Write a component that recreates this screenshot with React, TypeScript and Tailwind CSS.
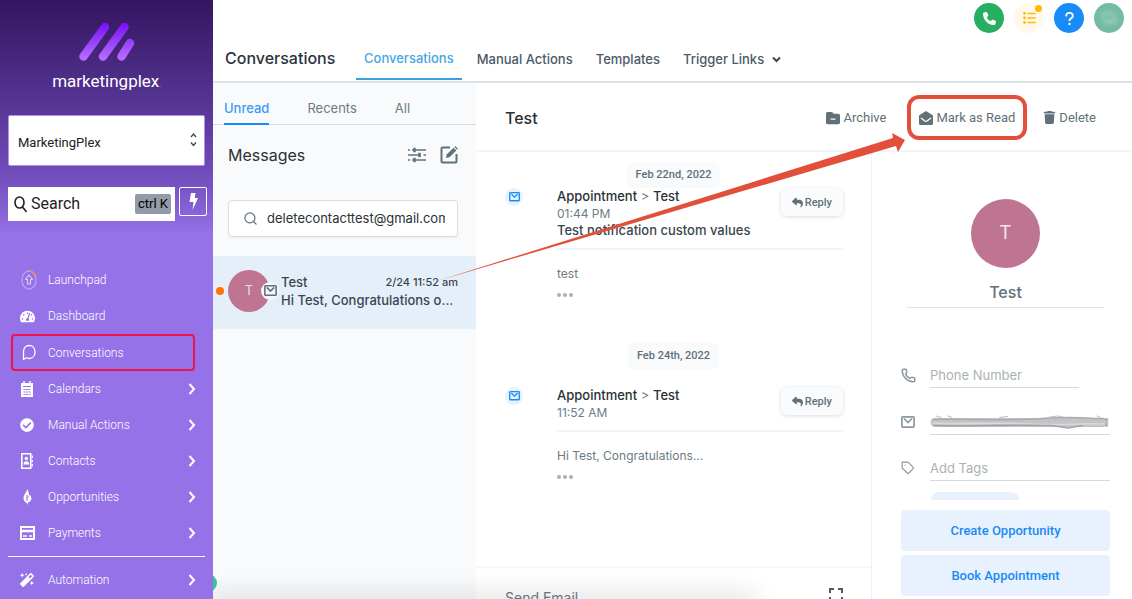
import React, { useState } from "react";
import clsx from "clsx";
import { Phone, Search } from "lucide-react";
import { FaCheckCircle, FaMagic, FaTachometerAlt } from "react-icons/fa";
import { FaFolderMinus, FaPhone, FaQuestion, FaReply, FaTrash } from "react-icons/fa6";
import { FiTag } from "react-icons/fi";

function Logo() {
  return (
    <svg width="58" height="42" viewBox="0 0 58 42" fill="none">
      <defs>
        <linearGradient id="bar" x1="0" y1="38" x2="0" y2="4" gradientUnits="userSpaceOnUse">
          <stop stopColor="#b56bff" />
          <stop offset="1" stopColor="#7a12f6" />
        </linearGradient>
      </defs>
      <g stroke="url(#bar)" strokeWidth="8.5" strokeLinecap="round">
        <path d="M5.500 36.500 27 7" />
        <path d="M25 36.500 46.500 7" />
        <path d="M43.500 36.500 52 23" />
      </g>
    </svg>
  );
}

function LaunchpadIcon() {
  return (
    <svg className="ml-1" width="16" height="20" viewBox="0 0 16 20" fill="none">
      <ellipse cx="8" cy="10" rx="7" ry="9" stroke="#b9a3f1" strokeWidth="1.300" />
      <path d="M9 1c3 .6 5 2.600 6 6" stroke="#f0904a" strokeWidth="1.500" />
      <path d="M8 5 4.500 9.500h2V14h3V9.500h2z" stroke="#d9ccf8" strokeWidth="1.200" strokeLinejoin="round" />
    </svg>
  );
}

function BubbleIcon() {
  return (
    <svg className="ml-1" width="14" height="17" viewBox="0 0 14 17" fill="none">
      <path
        d="M1.500 15.500V8c0-4 2.500-6.500 5.800-6.500S13 4.200 13 8s-2.400 6.500-5.700 6.500c-1.300 0-2.200-.2-3-.7z"
        stroke="#fff"
        strokeWidth="1.300"
        strokeLinejoin="round"
      />
    </svg>
  );
}

function CalendarIcon() {
  return (
    <svg width="12" height="16" viewBox="0 0 12 16" fill="none">
      <path d="M0 2h12v14H0z" fill="#fff" />
      <path d="M3 0v3M9 0v3" stroke="#fff" strokeWidth="1.500" />
      <path d="M2 5.500h8" stroke="#9572e8" />
      <path d="M2.500 8.500h7M2.500 11h7M2.500 13.500h7" stroke="#9572e8" strokeDasharray="2 .6" />
    </svg>
  );
}

function ContactsIcon() {
  return (
    <svg width="12" height="16" viewBox="0 0 12 16" fill="none">
      <path d="M.8.8h8.900v14.400H.8z" stroke="#fff" strokeWidth="1.600" />
      <circle cx="5.300" cy="5.500" r="1.700" fill="#fff" />
      <path d="M2.500 11.500c0-2.400 1-3.300 2.800-3.300s2.800.9 2.800 3.300z" fill="#fff" />
      <path d="M11.200 2.500v2.500M11.200 6.800v2.500M11.200 11v2.500" stroke="#fff" strokeWidth="1.300" />
    </svg>
  );
}

function FlameIcon() {
  return (
    <svg width="9" height="16" viewBox="0 0 9 16" fill="none">
      <path
        d="M4.200 0C4 3 .5 5.500.5 9.300c0 2.200 1.300 3.700 3 4.200L4.200 16l.8-2.500c2-.4 3.400-2 3.400-4 0-1.400-.6-2.700-1.500-3.700l-.7 1.500C6 4.500 5.200 2 4.200 0z"
        fill="#fff"
      />
      <path d="M4 6v6M4 9.500c.2-1 1-1.600 1.800-1.800" stroke="#9572e8" />
    </svg>
  );
}

function PaymentsIcon() {
  return (
    <svg width="15" height="14" viewBox="0 0 15 14" fill="none">
      <path d="M1 1h13v12H1z" stroke="#fff" strokeWidth="2" />
      <path d="M1 5h13" stroke="#fff" strokeWidth="2.500" />
      <path d="M3 10h4M9 10h3" stroke="#fff" strokeWidth="1.500" />
    </svg>
  );
}

function ChevronIcon() {
  return (
    <svg width="8" height="12" viewBox="0 0 8 12" fill="none">
      <path d="M1.500 1 6 6l-4.500 5" stroke="#fff" strokeWidth="2" />
    </svg>
  );
}

function MailIcon({ className }: { className?: string }) {
  return (
    <svg viewBox="0 0 14 12" fill="none" stroke="currentColor" strokeWidth="1.700" className={className}>
      <rect x=".9" y=".9" width="12.200" height="10.200" rx=".8" />
      <path d="m3 2.500 4 4 4-4" />
    </svg>
  );
}

function OpenMailIcon() {
  return (
    <svg width="14" height="14" viewBox="0 0 14 14" fill="none">
      <path d="M7 0 .6 4C.2 4.300 0 4.700 0 5.200V12.500A1.500 1.500 0 0 0 1.500 14h11a1.500 1.500 0 0 0 1.500-1.500V5.200c0-.5-.2-.9-.6-1.200z" fill="#607179" />
      <path d="m2.300 7.300 3.700 2.700c.6.4 1.400.4 2 0l3.700-2.700" stroke="#fff" strokeWidth="1.300" strokeLinecap="round" />
    </svg>
  );
}

function TasksIcon() {
  return (
    <svg width="13" height="12" viewBox="0 0 13 12" fill="none" stroke="#ffbc00" strokeWidth="2" strokeLinecap="round">
      <path d="M5 1.500h7M5 6h7M5 10.500h7" strokeWidth="1.600" />
      <path d="M1.500 1.500h.01M1.500 6h.01M1.500 10.500h.01" strokeWidth="2.800" />
    </svg>
  );
}

function FiltersIcon() {
  return (
    <svg width="18" height="16" viewBox="0 0 18 16" fill="none" stroke="#5f737d" strokeWidth="1.600">
      <path d="M0 3h2M4 3h14M0 8h13M15.500 8H18M0 13h2M4 13h14" />
      <path d="M6.500.8v4.400M11.500 5.800v4.400M6.500 10.800v4.400" strokeWidth="2.400" />
    </svg>
  );
}

function ComposeIcon() {
  return (
    <svg width="18" height="18" viewBox="0 0 18 18" fill="none">
      <path d="M10 1.500H2.500a1 1 0 0 0-1 1v13a1 1 0 0 0 1 1h13a1 1 0 0 0 1-1V8" stroke="#5f737d" strokeWidth="2" />
      <path d="m6 12 .7-3.500L13.500 1.700l2.800 2.800-6.800 6.800z" fill="#5f737d" />
      <path d="m14.300.9 1-.9 2.700 2.700-.9 1z" fill="#5f737d" />
    </svg>
  );
}

const navItems = [
  { label: "Launchpad", icon: <LaunchpadIcon />, more: false },
  { label: "Dashboard", icon: <FaTachometerAlt size={15} />, more: false },
  { label: "Conversations", icon: <BubbleIcon />, more: false },
  { label: "Calendars", icon: <CalendarIcon />, more: true },
  { label: "Manual Actions", icon: <FaCheckCircle size={14} />, more: true },
  { label: "Contacts", icon: <ContactsIcon />, more: true },
  { label: "Opportunities", icon: <FlameIcon />, more: true },
  { label: "Payments", icon: <PaymentsIcon />, more: true },
  { label: "Automation", icon: <FaMagic size={14} />, more: true },
];

function NavItem({ item }: { item: (typeof navItems)[number] }) {
  const active = item.label === "Conversations";
  return (
    <a
      href="#"
      className={clsx(
        "flex items-center rounded border-2",
        active ? "mr-[7px] h-[37px] border-[#ee1250]" : "h-9 border-transparent pr-1"
      )}
    >
      <span className="flex w-[35px] justify-center pr-[7px]">{item.icon}</span>
      <span className="flex-1 text-[12px] font-light">{item.label}</span>
      {item.more && <ChevronIcon />}
    </a>
  );
}

function Sidebar() {
  return (
    <aside className="z-10 flex w-[213px] shrink-0 flex-col bg-[#9572e8] bg-linear-to-b from-[#331560] via-[#6e4bb7] via-[170px] to-[#9572e8] to-[235px] font-['Roboto',sans-serif] text-white">
      <div className="flex h-[115px] flex-col items-center pt-5">
        <Logo />
        <h1 className="mt-[5px] text-[17px] leading-7">
          marketingplex<span className="text-[6px]">.</span>
        </h1>
      </div>
      <div className="relative mx-2 h-[51px]">
        <select
          aria-label="Account"
          className="h-full w-full appearance-none rounded-xs border border-[#b58cf2] bg-white px-[9px] pt-1 text-[13px] text-[#222]"
        >
          <option>MarketingPlex</option>
        </select>
        <svg className="absolute right-2 top-[18px]" width="7" height="14" viewBox="0 0 7 14" fill="none" stroke="#444">
          <path d="m1 4 2.500-3L6 4M1 9.500l2.500 3 2.500-3" strokeWidth="1.300" />
        </svg>
      </div>
      <div className="mt-[21px] flex gap-1 pl-2 pr-1.5">
        <label className="flex h-[34px] flex-1 items-center bg-white pl-1.5 pr-1 text-[#222]">
          <svg width="13" height="17" viewBox="0 0 13 17" fill="none" stroke="#222" strokeWidth="1.600">
            <ellipse cx="5.500" cy="6.500" rx="4.500" ry="5.500" />
            <path d="m8.500 11 4 5" />
          </svg>
          <input
            aria-label="Search"
            placeholder="Search"
            className="w-0 flex-1 pl-1 text-[16px] outline-none placeholder:text-[#222]"
          />
          <kbd className="rounded-xs bg-[#949ba8] px-[3px] font-['Roboto',sans-serif] text-[13px] leading-5 text-black">ctrl K</kbd>
        </label>
        <button aria-label="Quick actions" className="flex h-[29px] w-7 items-center justify-center rounded-xs border border-white">
          <svg width="9" height="17" viewBox="0 0 9 17" fill="#fff">
            <path d="M2 0h4.500L5.800 5H9L3.500 17l1-8H.5z" />
          </svg>
        </button>
      </div>
      <nav className="mx-[11px] mt-[41px] flex flex-col">
        {navItems.slice(0, 8).map((item) => (
          <NavItem key={item.label} item={item} />
        ))}
        <hr className="-mx-[3px] my-[5px] border-white" />
        <NavItem item={navItems[8]} />
      </nav>
    </aside>
  );
}

function TopBar() {
  const round = "flex size-[30px] items-center justify-center rounded-full";
  return (
    <header className="flex h-[83px] shrink-0 flex-col border-b-2 border-[#dbe2e8]">
      <div className="flex justify-end gap-[10px] pr-2 pt-[3px]">
        <button aria-label="Call" className={clsx(round, "bg-[#27ae60] text-white")}>
          <FaPhone size={13} />
        </button>
        <button aria-label="Tasks" className={clsx(round, "relative bg-[#fff8eb]")}>
          <TasksIcon />
          <span className="absolute right-[2px] top-[2px] size-[7px] rounded-full bg-[#ffbc00]" />
        </button>
        <button aria-label="Help" className={clsx(round, "bg-[#188bf6] text-white")}>
          <FaQuestion size={15} />
        </button>
        <button aria-label="Profile" className={clsx(round, "bg-[#73bba3]")}>
          <svg width="22" height="18" viewBox="0 0 22 18" fill="none" strokeLinecap="round" strokeWidth="4" className="blur-[2px]">
            <path d="M4 7c4-4 9-3 12-1" stroke="#92cbb8" />
            <path d="M7 12c4 2 7 2 11-1" stroke="#9bd0be" />
          </svg>
        </button>
      </div>
      <div className="flex flex-1 items-stretch pl-3 text-[13px] text-[#4b5a68]">
        <h2 className="w-[131px] pt-[13px] text-[16px] font-medium leading-6 text-[#2a3340]">Conversations</h2>
        <nav className="flex gap-[23px] font-medium leading-5">
          <a href="#" className="-mr-2 mb-px border-b-2 border-[#3b9fe0] px-2 pt-[15px] text-[#4aa5e3]">Conversations</a>
          <a href="#" className="pt-4">Manual Actions</a>
          <a href="#" className="pt-4">Templates</a>
          <button className="flex items-center gap-2 self-start pt-4">
            Trigger Links
            <svg width="9" height="7" viewBox="0 0 9 7" fill="none" stroke="#3c4857" strokeWidth="2">
              <path d="m1 1.500 3.500 3.500L8 1.500" />
            </svg>
          </button>
        </nav>
      </div>
    </header>
  );
}

function MessageList() {
  const [tab, setTab] = useState("Unread");
  const [query, setQuery] = useState("deletecontacttest@gmail.com");
  return (
    <section className="w-[263px] shrink-0 bg-[#f9fafc]">
      <div className="flex h-[42px] gap-[38px] border-b border-[#d5dde3] pl-[11px] text-[13px]">
        {["Unread", "Recents", "All"].map((name) => (
          <button
            key={name}
            onClick={() => setTab(name)}
            className={clsx(
              "-mb-px border-b-2 pt-3",
              name === tab ? "border-[#188bf6] font-medium text-[#3d9bf5]" : "border-transparent text-[#6c7b84]"
            )}
          >
            {name}
          </button>
        ))}
      </div>
      <div className="mt-[18px] flex items-center pl-[15px] pr-[18px]">
        <h3 className="flex-1 text-[16px] leading-6 text-[#2a3135]">Messages</h3>
        <button aria-label="Filters" className="mr-[14px]">
          <FiltersIcon />
        </button>
        <button aria-label="New message">
          <ComposeIcon />
        </button>
      </div>
      <label className="ml-[15px] mr-[18px] mt-[33px] flex h-[37px] items-center rounded border border-[#d9dee4] bg-white px-3 shadow-xs">
        <Search size={15} className="ml-[2px] shrink-0 text-[#607179]" />
        <input
          aria-label="Search messages"
          value={query}
          onChange={(e) => setQuery(e.target.value)}
          className="ml-[9px] w-0 flex-1 text-[13px] text-[#2a3135] outline-none"
        />
      </label>
      <a href="#" className="mt-[19px] flex h-[73px] items-center bg-[#e5effa] pb-[3px] pl-[3px] pr-[18px]">
        <span className="size-2 rounded-full bg-[#ff7402]" />
        <span className="relative ml-1 flex size-[42px] items-center justify-center rounded-full bg-[#bf7591] text-[13px] text-[#eddbe3]">
          T
          <span className="absolute -right-[9px] top-3 flex size-[18px] items-center justify-center rounded-full bg-[#f3f8fd]">
            <MailIcon className="w-[13px] text-[#607179]" />
          </span>
        </span>
        <span className="ml-[11px] flex flex-1 flex-col whitespace-nowrap text-[13px] font-medium leading-[18px] text-[#3a464d]">
          <span className="flex items-center justify-between">
            Test <time className="text-[11px]">2/24 11:52 am</time>
          </span>
          <span>Hi Test, Congratulations o...</span>
        </span>
      </a>
    </section>
  );
}

function DateBadge({ children }: { children: React.ReactNode }) {
  return (
    <div className="flex h-[26px] items-center self-center rounded-md bg-[#f9fafc] px-[9px] font-['Roboto',sans-serif] text-[11px] font-medium text-[#607179]">
      {children}
    </div>
  );
}

type EventProps = { time: string; subject?: string; body: string };

function AppointmentEvent({ time, subject, body }: EventProps) {
  return (
    <article className="flex pl-[29px] pr-7 text-[13px] leading-[17px]">
      <span className="flex size-[18px] shrink-0 items-center justify-center rounded-full bg-[#e6f2fe] text-[#188bf6]">
        <MailIcon className="w-[11px]" />
      </span>
      <div className="ml-[34px] flex-1 text-[#6c7b84]">
        <div className="flex items-start justify-between border-b-2 border-[#f1f6f9] pb-[9px]">
          <div>
            <h4>
              <b className="font-medium text-[#2a3135]">Appointment</b> &gt; <b className="font-medium text-[#2a3135]">Test</b>
            </h4>
            <p className="text-[12px]">{time}</p>
            {subject && <p className="font-medium text-[#3a464d]">{subject}</p>}
          </div>
          <button className="-mb-4 flex h-7 items-center gap-[2px] rounded-md bg-[#fafbfc] px-[11px] font-['Roboto',sans-serif] text-[11px] font-medium text-[#607179] shadow-[0_1px_4px_rgba(0,0,0,0.14)]">
            <FaReply size={11} /> Reply
          </button>
        </div>
        <p className="mt-[15px] text-[12px]">{body}</p>
        <button aria-label="Show more" className="mt-[11px] flex gap-[2px]">
          <i className="size-1 rounded-full bg-[#a9b2b7]" />
          <i className="size-1 rounded-full bg-[#a9b2b7]" />
          <i className="size-1 rounded-full bg-[#a9b2b7]" />
        </button>
      </div>
    </article>
  );
}

function Thread() {
  return (
    <section className="flex min-w-0 flex-1 flex-col">
      <div className="flex flex-1 flex-col pt-[10px]">
        <DateBadge>Feb 22nd, 2022</DateBadge>
        <AppointmentEvent time="01:44 PM" subject="Test notification custom values" body="test" />
        <div className="mt-[46px] flex flex-col">
          <DateBadge>Feb 24th, 2022</DateBadge>
        </div>
        <div className="mt-[18px]">
          <AppointmentEvent time="11:52 AM" body="Hi Test, Congratulations..." />
        </div>
      </div>
      <div className="flex h-[33px] items-start justify-between border-t-2 border-[#f6f7f8] pl-[29px] pr-7 pt-5 text-[14px] text-[#6c7b84]">
        <span className="leading-5">Send Email</span>
        <button aria-label="Expand editor">
          <svg width="14" height="14" viewBox="0 0 14 14" fill="none" stroke="#4c5c65" strokeWidth="2">
            <path d="M1 5V1h4M9 1h4v4M1 9v4h4M9 13h4V9" />
          </svg>
        </button>
      </div>
    </section>
  );
}

function ContactPanel() {
  const field = "h-[26px] border-b border-[#d5d9db] text-[13px] outline-none placeholder:text-[#aab2b6]";
  return (
    <aside className="flex w-[261px] shrink-0 flex-col border-l border-[#eef0f2] pl-[29px] pr-[22px]">
      <div className="mt-[47px] flex size-[69px] items-center justify-center self-center rounded-full bg-[#bf7591] text-[19px] text-[#f3e4ea]">
        T
      </div>
      <h3 className="mx-1.5 mt-3 border-b border-[#e0e2e4] pb-[3px] text-center text-[16px] font-medium leading-6 text-[#607179]">
        Test
      </h3>
      <div className="mt-[54px] flex items-center text-[#8b999f]">
        <Phone size={15} strokeWidth={2.400} className="mr-[14px]" />
        <input aria-label="Phone Number" placeholder="Phone Number" className={clsx(field, "w-[149px]")} />
      </div>
      <div className="mt-[21px] flex items-center text-[#8b999f]">
        <MailIcon className="mr-[15px] w-[14px]" />
        <div className="flex h-[26px] min-w-0 flex-1 items-center border-b border-[#d5d9db]">
          <svg viewBox="0 0 181 18" fill="none" strokeLinecap="round" className="w-full blur-[0.5px]" aria-label="Hidden email">
            <path d="M5 9.500h170" stroke="#c2c4c6" strokeWidth="9" />
            <path d="M3 6.500c40-1 70 2 110-1s50 1 62 0" stroke="#a9abaf" strokeWidth="1.500" />
            <path d="M3 10c30 2 60-1 95 1s50-1 78 0" stroke="#d9dadc" strokeWidth="1.500" />
            <path d="M4 12.500c36 1 80-1 118 0l17 2.500 14-2.500" stroke="#a0a3a7" strokeWidth="1.500" />
            <path d="m6 3 5 1.500M18 3l4 1.500M70 4.500l8-1M118 4.500l10-1.500 8 1.500M168 3l4 2" stroke="#b9bbbe" />
            <path d="M179 6h-2v2M177 11v2h2" stroke="#8d9094" />
          </svg>
        </div>
      </div>
      <div className="mt-5 flex items-center text-[#8b999f]">
        <FiTag size={14} className="mr-[15px]" />
        <input aria-label="Add Tags" placeholder="Add Tags" className={clsx(field, "w-0 flex-1")} />
      </div>
      <div className="ml-[30px] mt-[11px] h-2 w-[88px] rounded-t-full bg-[#e8f2fe]" />
      <div className="mt-[10px] flex flex-col gap-1 font-['Roboto',sans-serif] text-[13px] font-medium text-[#188bf6]">
        <button className="h-[41px] rounded bg-[#e8f2fe]">Create Opportunity</button>
        <button className="h-[41px] rounded bg-[#e8f2fe]">Book Appointment</button>
      </div>
    </aside>
  );
}

function App() {
  return (
    <div className="flex h-screen overflow-hidden bg-white font-['Inter',sans-serif]">
      <Sidebar />
      <main className="relative flex min-w-0 flex-1 flex-col">
        <TopBar />
        <div className="flex min-h-0 flex-1">
          <MessageList />
          <div className="flex min-w-0 flex-1 flex-col">
            <div className="flex h-[69px] shrink-0 items-center border-b-2 border-[#f3f5f6] pl-[29px] pr-9 pt-[2px] font-['Roboto',sans-serif] text-[13px] text-[#607179]">
              <h3 className="flex-1 font-['Inter',sans-serif] text-[16px] font-medium text-[#2a3135]">Test</h3>
              <button className="flex items-center gap-[3px]">
                <FaFolderMinus size={14} /> Archive
              </button>
              <button className="ml-[21px] flex h-[45px] items-center gap-[3px] rounded-xl border-4 border-[#e2503b] px-2">
                <OpenMailIcon /> Mark as Read
              </button>
              <button className="ml-4 flex items-center gap-[3px]">
                <FaTrash size={13} /> Delete
              </button>
            </div>
            <div className="flex min-h-0 flex-1">
              <Thread />
              <ContactPanel />
            </div>
          </div>
        </div>
        <span className="absolute -left-[14px] bottom-[7px] size-[18px] rounded-full bg-[#37ca8f]" />
        <div className="pointer-events-none absolute -bottom-2 left-0 h-2 w-[540px] shadow-[0_0_26px_4px_rgba(0,0,0,0.15)]" />
        {/* pointer from the unread message to the Mark as Read action */}
        <svg className="pointer-events-none absolute left-[224px] top-[130px]" width="470" height="156" viewBox="0 0 470 156" fill="#e2503b">
          <path d="M0 151 456 8l-1-5 13 7-7 12-2-6z" />
        </svg>
      </main>
    </div>
  );
}

export default App;
